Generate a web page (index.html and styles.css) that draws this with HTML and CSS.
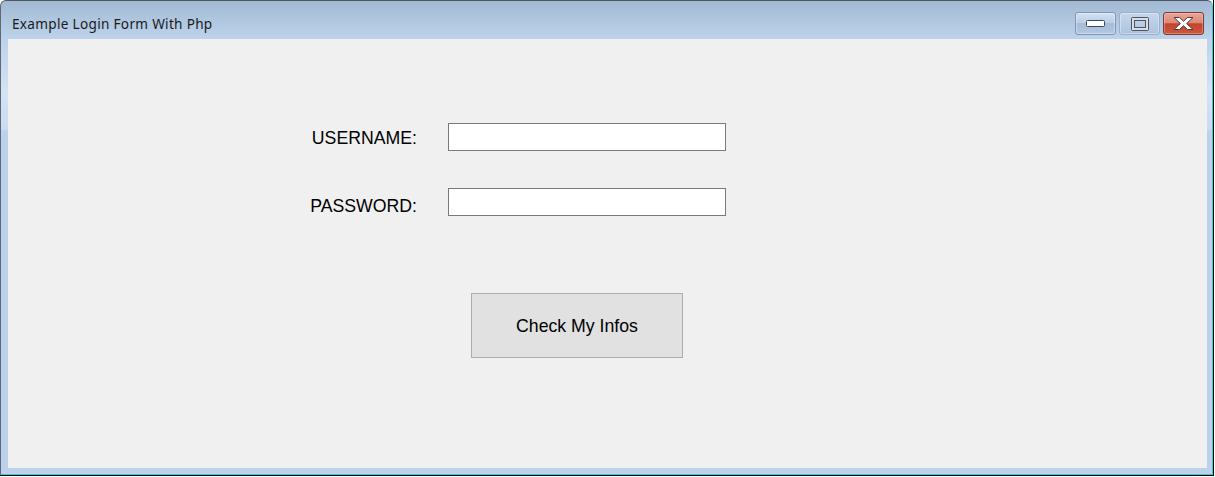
FILE: index.html
```html
<!DOCTYPE html>
<html>
<head>
<meta charset="utf-8">
<link rel="stylesheet" href="styles.css">
</head>
<body>
<div class="screen">
  <div class="window">
    <div class="frame">
      <div class="titlebar">
        <span class="title">Example Login Form With Php</span>
        <div class="caption-buttons">
          <div class="cbtn cbtn-min">
            <svg width="19" height="7" viewBox="0 0 19 7"><rect x="0.5" y="0.5" width="18" height="6" rx="1" fill="#fff" stroke="#3a4a5e"/></svg>
          </div>
          <div class="cbtn cbtn-max">
            <svg width="18" height="14" viewBox="0 0 18 14"><rect x="0.5" y="0.5" width="17" height="13" rx="1" fill="none" stroke="#4a5563"/><rect x="2" y="2" width="14" height="10" fill="none" stroke="#d9dde3" stroke-width="2"/><rect x="3.5" y="3.5" width="11" height="7" fill="none" stroke="#4a5563"/></svg>
          </div>
          <div class="cbtn cbtn-close">
            <svg width="21" height="15" viewBox="0 0 21 15"><path d="M1 1.5 H6.5 L10.5 5.2 L14.5 1.5 H20 L13.6 7.5 L20 13.5 H14.5 L10.5 9.8 L6.5 13.5 H1 L7.4 7.5 Z" fill="#fff" stroke="#4a3a3a" stroke-width="1" stroke-linejoin="round"/></svg>
          </div>
        </div>
      </div>
      <div class="content">
        <form class="login">
          <div class="fields">
            <label class="lbl lbl-user">USERNAME:</label>
            <div class="input"></div>
            <label class="lbl lbl-pass">PASSWORD:</label>
            <div class="input"></div>
          </div>
          <div class="actions">
            <div class="btn">Check My Infos</div>
          </div>
        </form>
      </div>
    </div>
  </div>
</div>
</body>
</html>
```

FILE: styles.css
```css
html, body {
  margin: 0;
  padding: 0;
  background: #ffffff;
}

.screen {
  width: 1215px;
  height: 477px;
  overflow: hidden;
  background: #ffffff;
}

.window {
  width: 1214px;
  height: 476px;
  box-sizing: border-box;
  border-right: 1px solid #000;
  border-bottom: 1px solid #000;
}

.frame {
  height: 100%;
  box-sizing: border-box;
  border-top: 1px solid #4e5660;
  border-left: 1px solid #5f6975;
  border-right: 1px solid #2fcde4;
  border-bottom: 1px solid #2fcde4;
  border-radius: 6px 6px 0 0;
  padding: 0 5px 6px 7px;
  display: flex;
  flex-direction: column;
  background: linear-gradient(to bottom,
    #a2b9d3 0px,
    #b0c7e0 20px,
    #bcd3eb 38px,
    #c6d9ef 60px,
    #d4e3f4 90px,
    #cadcf0 128px,
    #bbd2ea 130px,
    #bbd2ea 100%);
}

.titlebar {
  height: 38px;
  flex: none;
  display: flex;
  align-items: flex-start;
  justify-content: space-between;
}

.title {
  margin: 14px 0 0 4px;
  font-family: "Noto Sans", "DejaVu Sans", sans-serif;
  font-size: 13.6px;
  letter-spacing: 0.3px;
  line-height: 18px;
  color: #1b1b1b;
}

.caption-buttons {
  display: flex;
  gap: 3px;
  margin-top: 11px;
  margin-right: 3px;
}

.cbtn {
  width: 41px;
  height: 23px;
  box-sizing: border-box;
  border: 1px solid #7f95b2;
  border-radius: 3px;
  display: flex;
  align-items: center;
  justify-content: center;
  background: linear-gradient(to bottom, #d3e1f0 0%, #bccfe6 45%, #a6bcd8 50%, #b3c8e2 100%);
  box-shadow: inset 0 0 0 1px rgba(255,255,255,0.35);
}

.cbtn-max {
  border-color: #9bb0cb;
  background: linear-gradient(to bottom, #c6d7ea 0%, #b9cde5 50%, #adc3de 100%);
}

.cbtn-close {
  border-color: #7a3a30;
  background: linear-gradient(to bottom, #e9a597 0%, #dc8a78 45%, #c5422b 52%, #c85a40 100%);
  box-shadow: inset 0 0 0 1px rgba(255,220,210,0.35);
}

.content {
  flex: 1;
  background: #f0f0f0;
  padding-top: 84px;
}

.login {
  margin: 0;
  font-family: "Liberation Sans", Arial, sans-serif;
  font-size: 17.7px;
  color: #000;
}

.fields {
  display: grid;
  grid-template-columns: 409px 278px;
  column-gap: 31px;
  row-gap: 37px;
  grid-auto-rows: 28px;
}

.lbl {
  justify-self: end;
  line-height: 28px;
}

.lbl-user {
  margin-top: 1px;
}

.lbl-pass {
  margin-top: 4px;
}

.input {
  box-sizing: border-box;
  height: 28px;
  border: 1px solid #7a7a7a;
  background: #fff;
}

.actions {
  padding-left: 463px;
  margin-top: 77px;
}

.btn {
  width: 212px;
  height: 65px;
  box-sizing: border-box;
  border: 1px solid #adadad;
  background: #e1e1e1;
  display: flex;
  align-items: center;
  justify-content: center;
  padding-top: 1px;
}
```
